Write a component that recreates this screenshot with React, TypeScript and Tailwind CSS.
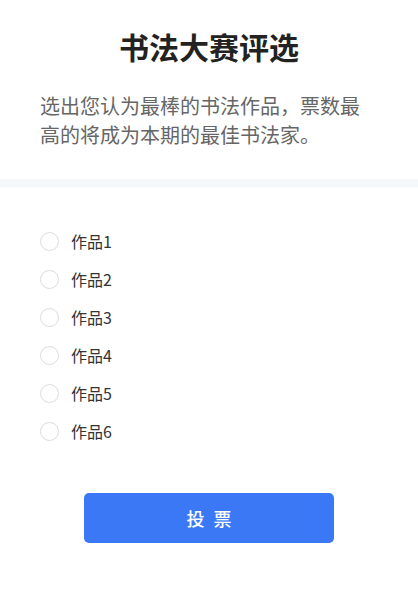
import { useState } from "react";

const works = ["作品1", "作品2", "作品3", "作品4", "作品5", "作品6"];

export default function App() {
  const [picked, setPicked] = useState<number | null>(null);

  return (
    <div
      className="min-h-screen w-full bg-white"
      style={{ fontFamily: '"Noto Sans CJK SC", "Noto Sans", sans-serif' }}
    >
      <header className="px-10 pt-[26px] pb-[30px]">
        <h1 className="text-center text-[30px] font-bold leading-[40px] text-[#222]">
          书法大赛评选
        </h1>
        <p className="mt-[25px] text-[20px] leading-[29px] text-[#666]">
          选出您认为最棒的书法作品，票数最高的将成为本期的最佳书法家。
        </p>
      </header>

      <div className="h-2 bg-[#f5f7fa]" />

      <ul className="flex flex-col gap-[14px] px-10 pt-[42px]">
        {works.map((w, i) => (
          <li key={w}>
            <label className="flex h-6 cursor-pointer items-center gap-3">
              <span
                onClick={() => setPicked(i)}
                className={
                  picked === i
                    ? "flex h-[19px] w-[19px] items-center justify-center rounded-full border border-[#3b78f6]"
                    : "flex h-[19px] w-[19px] items-center justify-center rounded-full border border-[#dcdcdc]"
                }
              >
                {picked === i && <span className="h-[9px] w-[9px] rounded-full bg-[#3b78f6]" />}
              </span>
              <span className="text-[16px] text-[#333]">{w}</span>
            </label>
          </li>
        ))}
      </ul>

      <div className="flex justify-center pt-[50px]">
        <button className="h-[50px] w-[250px] rounded-[5px] bg-[#3b78f6] pl-[9px] text-[18px] font-medium tracking-[9px] text-white">
          投票
        </button>
      </div>
    </div>
  );
}
